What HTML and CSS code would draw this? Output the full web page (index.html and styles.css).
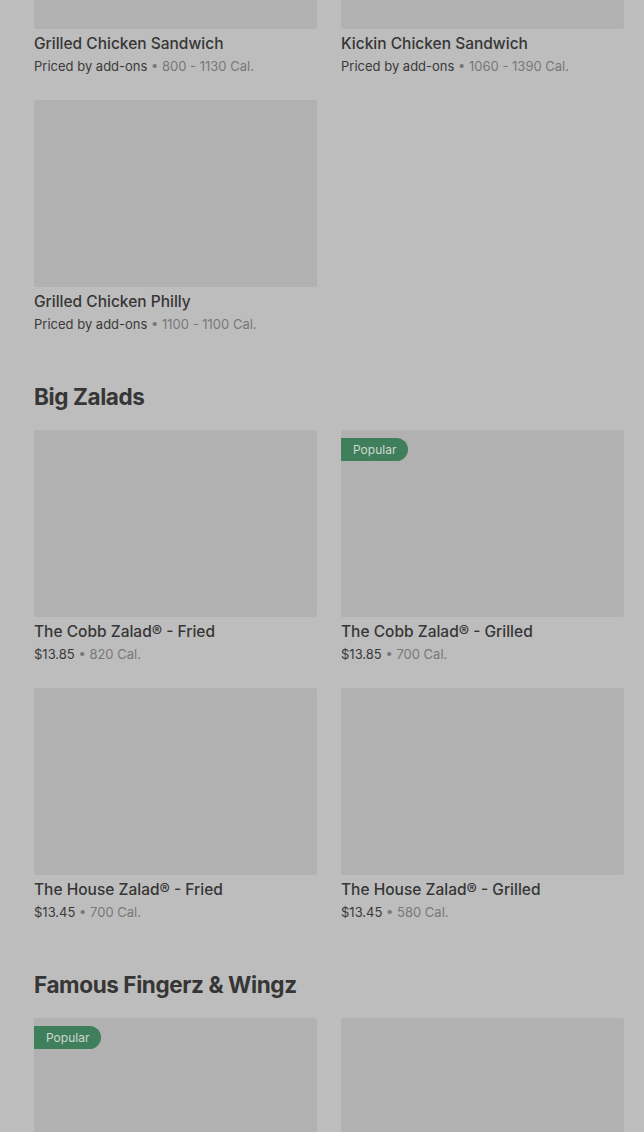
FILE: index.html
```
<!DOCTYPE html>
<html lang="en">
<head>
    <meta charset="UTF-8">
    <meta name="viewport" content="width=device-width, initial-scale=1.0">
    <title>Menu</title>
    <link rel="stylesheet" href="styles.css">
</head>
<body>
    <div class="menu">
        <div class="section first">
            <div class="grid">
                <div class="item">
                    <div class="thumb"></div>
                    <div class="name">Grilled Chicken Sandwich</div>
                    <div class="meta">Priced by add-ons <span class="cal">• 800 - 1130 Cal.</span></div>
                </div>
                <div class="item">
                    <div class="thumb"></div>
                    <div class="name">Kickin Chicken Sandwich</div>
                    <div class="meta">Priced by add-ons <span class="cal">• 1060 - 1390 Cal.</span></div>
                </div>
                <div class="item">
                    <div class="thumb"></div>
                    <div class="name">Grilled Chicken Philly</div>
                    <div class="meta">Priced by add-ons <span class="cal">• 1100 - 1100 Cal.</span></div>
                </div>
            </div>
        </div>

        <div class="section">
            <h2>Big Zalads</h2>
            <div class="grid">
                <div class="item">
                    <div class="thumb"></div>
                    <div class="name">The Cobb Zalad® - Fried</div>
                    <div class="meta">$13.85 <span class="cal">• 820 Cal.</span></div>
                </div>
                <div class="item">
                    <div class="thumb"><span class="badge">Popular</span></div>
                    <div class="name">The Cobb Zalad® - Grilled</div>
                    <div class="meta">$13.85 <span class="cal">• 700 Cal.</span></div>
                </div>
                <div class="item">
                    <div class="thumb"></div>
                    <div class="name">The House Zalad® - Fried</div>
                    <div class="meta">$13.45 <span class="cal">• 700 Cal.</span></div>
                </div>
                <div class="item">
                    <div class="thumb"></div>
                    <div class="name">The House Zalad® - Grilled</div>
                    <div class="meta">$13.45 <span class="cal">• 580 Cal.</span></div>
                </div>
            </div>
        </div>

        <div class="section">
            <h2>Famous Fingerz &amp; Wingz</h2>
            <div class="grid">
                <div class="item">
                    <div class="thumb"><span class="badge">Popular</span></div>
                </div>
                <div class="item">
                    <div class="thumb"></div>
                </div>
            </div>
        </div>
    </div>
</body>
</html>
```

FILE: styles.css
```
body {
    margin: 0;
    background: #bdbdbd;
    font-family: Inter, "Noto Sans", sans-serif;
    color: #333;
    overflow: hidden;
}
.menu {
    padding: 0 20px 0 34px;
    margin-top: -158px;
}
.section {
    margin-top: 47px;
}
.section.first {
    margin-top: 0;
}
h2 {
    margin: 0 0 17px;
    font-size: 22.5px;
    line-height: 32px;
    font-weight: 700;
    letter-spacing: -0.4px;
    color: #363636;
}
.grid {
    display: grid;
    grid-template-columns: 283px 283px;
    column-gap: 24px;
    row-gap: 24px;
}
.thumb {
    position: relative;
    height: 187px;
    background: #b1b1b1;
    border-radius: 2px;
}
.badge {
    position: absolute;
    top: 8px;
    left: 0;
    height: 23px;
    line-height: 23px;
    padding: 0 12px;
    background: #3f7f5b;
    color: #cfd8d2;
    font-size: 12px;
    border-radius: 0 12px 12px 0;
}
.name {
    margin-top: 5px;
    font-size: 15.5px;
    line-height: 20px;
    font-weight: 500;
    color: #363636;
}
.meta {
    margin-top: 2px;
    font-size: 13px;
    line-height: 20px;
    color: #3a3a3a;
}
.cal {
    color: #787878;
}
```
